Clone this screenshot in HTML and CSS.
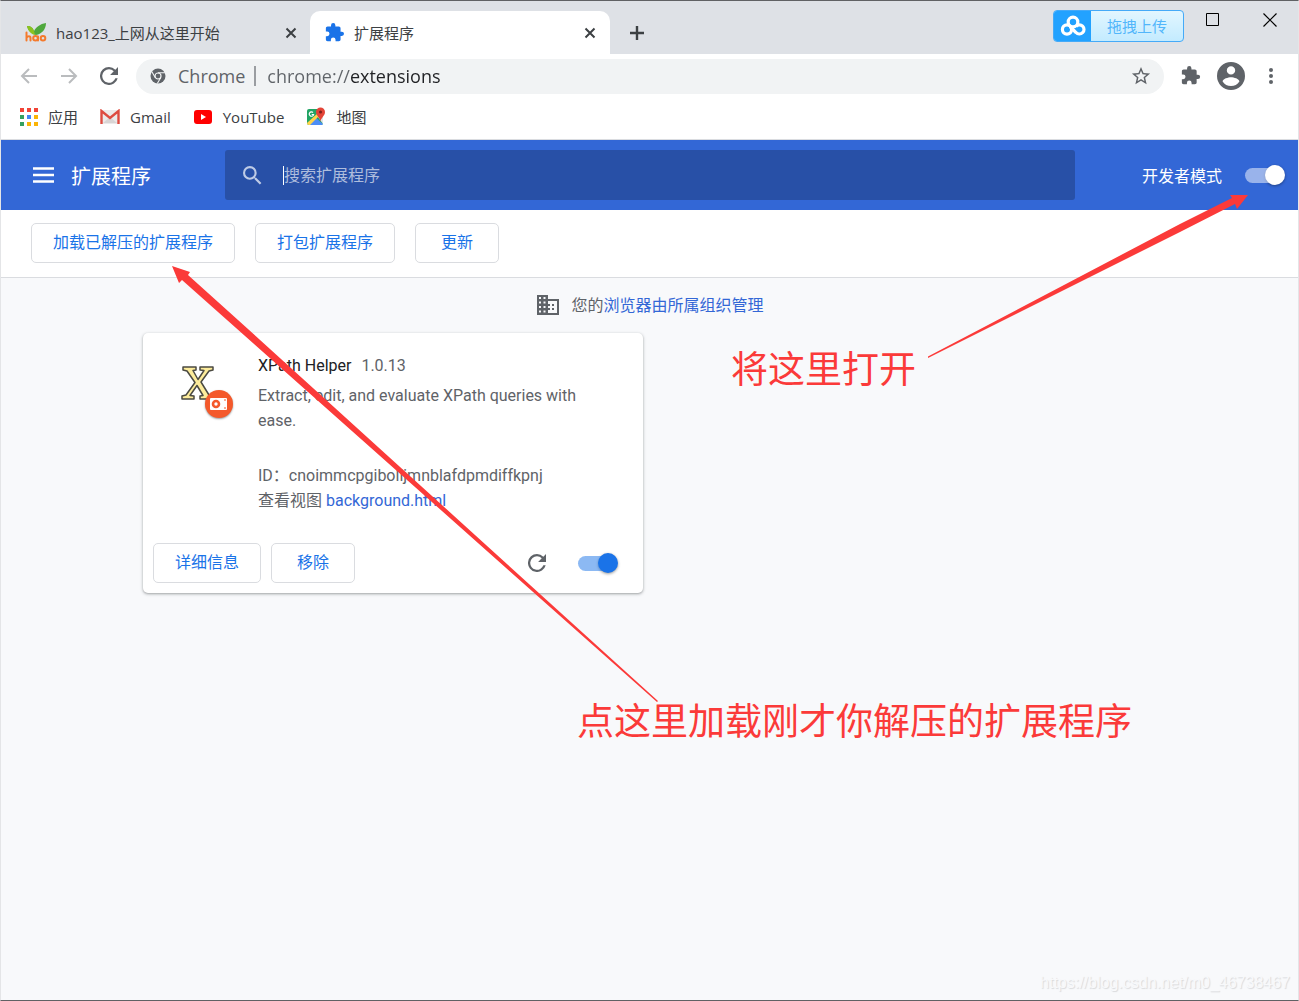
FILE: index.html
```html
<!DOCTYPE html>
<html lang="zh-CN">
<head>
<meta charset="utf-8">
<meta name="viewport" content="width=device-width, initial-scale=1">
<title>扩展程序</title>
<link rel="stylesheet" href="styles.css">
</head>
<body>
<div class="window">
  <header class="chrome">
    <div class="tabstrip">
      <div class="tab">
        <svg class="tab-icon" width="22" height="20" viewBox="0 0 22 20" aria-hidden="true">
          <path d="M2 3c4 0 6 2 7 5C11 4 15 1 21 0c0 6-4 11-10 12C7 11 3 8 2 3z" fill="#4fa83d"/>
          <path d="M2 3c4 0 6 2 7 5l1 4C6 11 3 8 2 3z" fill="#8cc220"/>
          <g fill="none" stroke="#f47a2c" stroke-width="2" stroke-linecap="round"><path d="M1.500 9.500v8M1.500 15c1-2.500 4-2.500 4 0v2.500M13 13.500v4"/><circle cx="10.500" cy="15.300" r="2.300"/><circle cx="18" cy="15.300" r="2.300"/></g>
        </svg>
        <span class="tab-title">hao123_上网从这里开始</span>
        <button class="icon-btn" aria-label="关闭标签页"><svg width="12" height="12" viewBox="0 0 12 12"><path d="M1.500 1.500l9 9M10.500 1.500l-9 9" stroke="#3c4043" stroke-width="2"/></svg></button>
      </div>
      <div class="tab tab-active">
        <svg class="tab-icon" width="19" height="19" viewBox="1 1 22 22" aria-hidden="true"><path fill="#1a73e8" d="M20.500 11H19V7c0-1.100-.9-2-2-2h-4V3.500a2.500 2.500 0 0 0-5 0V5H4c-1.100 0-2 .9-2 2v3.800h1.500a2.700 2.700 0 0 1 0 5.400H2V20c0 1.100.9 2 2 2h3.800v-1.500a2.700 2.700 0 0 1 5.400 0V22H17c1.100 0 2-.9 2-2v-4h1.500a2.500 2.500 0 0 0 0-5z"/></svg>
        <span class="tab-title">扩展程序</span>
        <button class="icon-btn" aria-label="关闭标签页"><svg width="12" height="12" viewBox="0 0 12 12"><path d="M1.500 1.500l9 9M10.500 1.500l-9 9" stroke="#3c4043" stroke-width="2"/></svg></button>
      </div>
      <button class="icon-btn new-tab" aria-label="新标签页"><svg width="16" height="16" viewBox="0 0 16 16"><path d="M8 1v14M1 8h14" stroke="#3c4043" stroke-width="2.400"/></svg></button>
      <div class="window-controls">
        <button class="upload">
          <span class="upload-logo"><svg width="26" height="22" viewBox="0 0 26 22" aria-hidden="true"><g fill="none" stroke="#fff" stroke-width="3.200"><circle cx="13" cy="7" r="4.800"/><circle cx="7" cy="14.500" r="4.600"/><path d="M10 11.500l6 6a4.600 4.600 0 1 0 0-6.200"/></g></svg></span>
          <span class="upload-text">拖拽上传</span>
        </button>
        <button class="icon-btn" aria-label="最大化"><svg width="14" height="14" viewBox="0 0 14 14"><path d="M.5.5h12v12H.5z" fill="none" stroke="#000"/></svg></button>
        <button class="icon-btn" aria-label="关闭"><svg width="14" height="14" viewBox="0 0 14 14"><path d="M.5.5l13 13M13.500.5l-13 13" stroke="#000" stroke-width="1.200"/></svg></button>
      </div>
    </div>

    <div class="navbar">
      <button class="icon-btn" aria-label="后退"><svg width="18" height="16" viewBox="0 0 18 16"><path d="M17 8H2M9 1L2 8l7 7" fill="none" stroke="#babcbe" stroke-width="2"/></svg></button>
      <button class="icon-btn" aria-label="前进"><svg width="18" height="16" viewBox="0 0 18 16"><path d="M1 8h15M9 1l7 7-7 7" fill="none" stroke="#babcbe" stroke-width="2"/></svg></button>
      <button class="icon-btn" aria-label="重新加载"><svg width="18" height="18" viewBox="4 4 16 16"><path fill="#5f6368" d="M17.650 6.350A7.960 7.960 0 0 0 12 4a8 8 0 1 0 7.730 10h-2.080A6 6 0 1 1 12 6c1.660 0 3.140.69 4.220 1.780L13 11h7V4z"/></svg></button>
      <div class="omnibox">
        <svg width="16" height="16" viewBox="0 0 16 16" aria-hidden="true"><circle cx="8" cy="8" r="7.500" fill="#5f6368"/><circle cx="8" cy="8" r="3" fill="none" stroke="#f1f3f4" stroke-width="1.200"/><path d="M8 4.800h7M5.200 9.500L1.900 3.700M10.700 9.700L7.300 15.500" stroke="#f1f3f4" stroke-width="1.100"/></svg>
        <span class="omnibox-chip">Chrome</span>
        <input class="omnibox-input" type="text" aria-label="地址栏" value="chrome://extensions">
        <button class="icon-btn" aria-label="添加书签"><svg width="20" height="20" viewBox="1 1 22 22"><path fill="#5f6368" d="M22 9.240l-7.190-.62L12 2 9.190 8.630 2 9.240l5.460 4.730L5.820 21 12 17.270 18.180 21l-1.630-7.030zM12 15.400l-3.760 2.270 1-4.280-3.320-2.880 4.380-.38L12 6.100l1.710 4.040 4.380.38-3.320 2.880 1 4.280z"/></svg></button>
      </div>
      <button class="icon-btn" aria-label="扩展程序"><svg width="20" height="20" viewBox="1 1 23 23"><path fill="#5f6368" d="M20.500 11H19V7c0-1.100-.9-2-2-2h-4V3.500a2.500 2.500 0 0 0-5 0V5H4c-1.100 0-2 .9-2 2v3.800h1.500a2.700 2.700 0 0 1 0 5.400H2V20c0 1.100.9 2 2 2h3.800v-1.500a2.700 2.700 0 0 1 5.400 0V22H17c1.100 0 2-.9 2-2v-4h1.500a2.500 2.500 0 0 0 0-5z"/></svg></button>
      <button class="icon-btn avatar" aria-label="个人资料"><svg width="28" height="28" viewBox="2 2 20 20"><path fill="#5f6368" d="M12 2a10 10 0 1 0 0 20 10 10 0 0 0 0-20zm0 3a3 3 0 1 1 0 6 3 3 0 0 1 0-6zm0 14.200a7.200 7.200 0 0 1-6-3.220c.03-1.990 4-3.080 6-3.080s5.970 1.090 6 3.080a7.200 7.200 0 0 1-6 3.220z"/></svg></button>
      <button class="icon-btn" aria-label="菜单"><svg width="6" height="18" viewBox="0 0 6 18"><g fill="#5f6368"><circle cx="3" cy="3" r="2"/><circle cx="3" cy="9" r="2"/><circle cx="3" cy="15" r="2"/></g></svg></button>
    </div>

    <nav class="bookmarks" aria-label="书签栏">
      <a href="#apps"><svg width="18" height="18" viewBox="0 0 18 18" aria-hidden="true"><path fill="#f14336" d="M0 0h4v4H0zM7 0h4v4H7zM14 0h4v4h-4z"/><path fill="#34a060" d="M0 7h4v4H0zM0 14h4v4H0z"/><path fill="#4285f4" d="M7 7h4v4H7z"/><path fill="#fbb405" d="M14 7h4v4h-4zM7 14h4v4H7zM14 14h4v4h-4z"/></svg>应用</a>
      <a href="#gmail"><svg width="20" height="16" viewBox="0 0 20 16" aria-hidden="true"><path fill="#eceaea" d="M2 1h16v14H2z"/><path fill="#d9d5d5" d="M3 14l7-6 7 6z"/><path d="M1.500 15V2l8.500 7 8.500-7v13" fill="none" stroke="#dd4b40" stroke-width="2.400"/></svg>Gmail</a>
      <a href="#youtube"><svg width="20" height="14" viewBox="0 0 20 14" aria-hidden="true"><rect x="1" width="18" height="14" rx="3" fill="#f00"/><path d="M8 4l5 3-5 3z" fill="#fff"/></svg>YouTube</a>
      <a href="#maps"><svg width="20" height="20" viewBox="0 0 20 20" aria-hidden="true"><rect x="1" y="2" width="16" height="16" rx="2" fill="#21a464"/><path d="M9 10l8 7-1 1H3z" fill="#4c8df6"/><path d="M1 16L13 5l2 2L4 18H3c-1 0-2-1-2-2z" fill="#ffd54a"/><path d="M12 10l5-3v10z" fill="#e3e5e6"/><path d="M7 5.500a2.200 2.200 0 1 0 .6 2H5.700" stroke="#fff" stroke-width="1.200" fill="none"/><path d="M14.500 15c0-4-4.500-6-4.500-10a4.500 4.500 0 0 1 9 0c0 4-4.500 6-4.500 10z" fill="#e34437"/><circle cx="14.500" cy="5" r="1.600" fill="#7c221b"/></svg>地图</a>
    </nav>
  </header>

  <div class="appbar">
    <button class="icon-btn" aria-label="主菜单"><svg width="21" height="16" viewBox="0 0 21 16"><path d="M0 1.500h21M0 8h21M0 14.500h21" stroke="#fff" stroke-width="2.400"/></svg></button>
    <h1 class="appbar-title">扩展程序</h1>
    <label class="search">
      <svg width="20" height="20" viewBox="3 2 19 19" aria-hidden="true"><path fill="#becbe6" d="M15.500 14h-.79l-.28-.27A6.470 6.470 0 0 0 16 9.500 6.500 6.500 0 1 0 9.500 16c1.610 0 3.090-.59 4.230-1.570l.27.28v.79l5 4.990L20.490 19zm-6 0a4.500 4.500 0 1 1 0-9 4.500 4.500 0 0 1 0 9z"/></svg>
      <input type="search" placeholder="搜索扩展程序" aria-label="搜索扩展程序">
    </label>
    <label class="dev-mode">开发者模式<input class="toggle toggle-light" type="checkbox" checked></label>
  </div>

  <div class="dev-tools">
    <button class="btn">加载已解压的扩展程序</button>
    <button class="btn">打包扩展程序</button>
    <button class="btn">更新</button>
  </div>

  <main class="content">
    <p class="managed">
      <svg width="22" height="20" viewBox="0 0 22 20" aria-hidden="true"><path fill="#5f6368" fill-rule="evenodd" d="M0 0h11v4h11v16H0zM2 2v2h2V2zM6.500 2v2h2V2zM2 6.500v2h2v-2zM6.500 6.500v2h2v-2zM2 11v2h2v-2zM6.500 11v2h2v-2zM2 15.500v2h2v-2zM6.500 15.500v2h2v-2zM11 6v3h2v2h-2v2h2v2h-2v3h9V6zM15 9h2v2h-2zM15 13h2v2h-2z"/></svg>
      <span>您的<a href="#managed">浏览器由所属组织管理</a></span>
    </p>
    <div class="cards">
      <article class="card">
        <div class="card-main">
          <div class="card-icon">
            <svg width="36" height="36" viewBox="0 0 36 36" aria-hidden="true"><path d="M2 2h13v3l-3 .5 5 9 6-9-4-.5V2h13v3l-4 1-8 11 8 13 4 1v3H19v-3l3-.5-6-10-7 10 4 .5v3H1v-3l4-1 9-12.500L6 6 2 5z" fill="#fdec9b" stroke="#4b4a42" stroke-width="1.500" stroke-linejoin="round"/></svg>
            <span class="badge"><svg width="18" height="12" viewBox="0 0 18 12" aria-hidden="true"><rect width="17" height="12" rx="1" fill="#fff"/><circle cx="6" cy="6" r="3" fill="none" stroke="#f4592b" stroke-width="2.600"/><path d="M15 1v2M15 9v2" stroke="#f4592b"/></svg></span>
          </div>
          <div class="card-text">
            <h2 class="card-title">XPath Helper <span class="version">1.0.13</span></h2>
            <p class="description">Extract, edit, and evaluate XPath queries with ease.</p>
            <p>ID：cnoimmcpgibolljmnblafdpmdiffkpnj</p>
            <p>查看视图 <a href="#background">background.html</a></p>
          </div>
        </div>
        <div class="card-actions">
          <button class="btn">详细信息</button>
          <button class="btn">移除</button>
          <button class="icon-btn reload" aria-label="重新加载"><svg width="18" height="18" viewBox="4 4 16 16"><path fill="#5f6368" d="M17.650 6.350A7.960 7.960 0 0 0 12 4a8 8 0 1 0 7.730 10h-2.080A6 6 0 1 1 12 6c1.660 0 3.140.69 4.220 1.780L13 11h7V4z"/></svg></button>
          <input class="toggle" type="checkbox" aria-label="启用 XPath Helper" checked>
        </div>
      </article>
    </div>
  </main>

  <svg class="arrows" width="1299" height="760" viewBox="0 0 1299 760" aria-hidden="true">
    <path fill="#fb3a39" d="M1248 195l-11 14-2-5-55 28-252 126v-1.500l252-132.500 52-26-2-3zM172 266l7 17 3-3 45 40 430 382 1-1-420-381-50-45 2-3z"/>
  </svg>
  <p class="note note-toggle">将这里打开</p>
  <p class="note note-load">点这里加载刚才你解压的扩展程序</p>
  <p class="watermark">https://blog.csdn.net/m0_46738467</p>
</div>
</body>
</html>
```
FILE: styles.css
```css
* {
  box-sizing: border-box;
}

body {
  margin: 0;
  font-family: "Open Sans", "Noto Sans CJK SC", sans-serif;
  font-size: 16px;
  color: #3c4043;
}

h1, h2, p {
  margin: 0;
  font-weight: 400;
}

a {
  color: #3367d6;
  text-decoration: none;
}

button, input {
  margin: 0;
  padding: 0;
  border: 0;
  background: none;
  font: inherit;
  color: inherit;
}

input:focus {
  outline: none;
}

svg {
  display: block;
  flex: none;
}

.window {
  position: relative;
  display: flex;
  flex-direction: column;
  min-height: 100vh;
  border: 1px solid #e4e5e7;
  border-top-color: #606164;
  border-bottom-color: #606164;
  background: #f8f9fb;
}

.icon-btn {
  display: grid;
  place-items: center;
  flex: none;
}

/* Tab strip */
.chrome {
  background: #fff;
  border-bottom: 1px solid #dadce0;
}

.tabstrip {
  display: flex;
  align-items: flex-end;
  height: 53px;
  background: #dee1e6;
}

.tab {
  display: flex;
  align-items: center;
  gap: 10px;
  flex: 0 1 300px;
  height: 43px;
  padding: 0 14px 0 15px;
  font-size: 15px;
}

.tab:first-child {
  flex-basis: 309px;
  padding: 0 13px 0 24px;
  gap: 9px;
}

.tab-active {
  border-radius: 10px 10px 0 0;
  background: #fff;
}

.tab-title {
  flex: 1;
  white-space: nowrap;
}

.new-tab {
  width: 54px;
  height: 43px;
}

.window-controls {
  display: flex;
  gap: 22px;
  align-self: flex-start;
  margin-left: auto;
  padding: 9px 21px 0 0;
}

.window-controls .icon-btn {
  width: 14px;
  height: 20px;
}

.window-controls .icon-btn + .icon-btn {
  margin-left: 21px;
}

.upload {
  display: flex;
  width: 131px;
  height: 32px;
  overflow: hidden;
  border: 1px solid #45aaf8;
  border-radius: 4px;
  background: linear-gradient(#e2f6ff, #c3ebff);
  color: #52b6fb;
  font-size: 15px;
}

.upload-logo {
  display: grid;
  place-items: center;
  width: 37px;
  height: 30px;
  background: #22a2ff;
}

.upload-text {
  flex: 1;
  line-height: 30px;
}

/* Navigation bar */
.navbar {
  display: flex;
  align-items: center;
  height: 44px;
  padding: 0 24px 0 19px;
  gap: 22px;
}

.navbar > .omnibox {
  margin-left: -4px;
  margin-right: -5px;
}

.navbar .avatar {
  margin: 0 1px 0 -6px;
}

.omnibox {
  display: flex;
  align-items: center;
  flex: 1;
  height: 35px;
  padding: 0 13px 0 14px;
  border-radius: 18px;
  background: #f1f3f4;
  font-size: 18px;
}

.omnibox-chip {
  margin-left: 12px;
  padding-right: 9px;
  border-right: 2px solid #9a9da1;
  color: #5f6368;
  line-height: 20px;
}

.omnibox-input {
  flex: 1;
  min-width: 0;
  margin-left: 11px;
  background: linear-gradient(90deg, #5f6368 83px, #202124 83px);
  background-clip: text;
  -webkit-background-clip: text;
  -webkit-text-fill-color: transparent;
}

.bookmarks {
  display: flex;
  align-items: center;
  gap: 22px;
  height: 41px;
  padding: 0 19px 4px;
  font-size: 15px;
}

.bookmarks a {
  display: flex;
  align-items: center;
  gap: 10px;
  color: #3c4043;
}

/* Page header */
.appbar {
  display: flex;
  align-items: center;
  height: 70px;
  padding: 0 13px 0 32px;
  background: #3367d6;
  color: #fff;
}

.appbar-title {
  width: 154px;
  margin-left: 17px;
  font-size: 20px;
}

.search {
  display: flex;
  align-items: center;
  gap: 20px;
  flex: 0 1 850px;
  height: 50px;
  padding: 0 18px;
  border-radius: 3px;
  background: #2850a7;
}

.search input {
  flex: 1;
  min-width: 0;
  height: 19px;
  border-left: 1px solid #fff;
}

.search input::placeholder {
  color: #aebddd;
}

.dev-mode {
  display: flex;
  align-items: center;
  gap: 23px;
  margin-left: auto;
}

.toggle {
  display: grid;
  align-items: center;
  width: 40px;
  height: 20px;
  appearance: none;
  color: #1a73e8;
}

.toggle::before,
.toggle::after {
  grid-area: 1 / 1;
  content: "";
  background: currentColor;
}

.toggle::before {
  width: 35px;
  height: 15px;
  border-radius: 8px;
  opacity: 0.5;
}

.toggle::after {
  justify-self: end;
  width: 20px;
  height: 20px;
  border-radius: 50%;
  box-shadow: 0 1px 3px rgba(0, 0, 0, 0.4);
}

.toggle-light {
  color: #fff;
}

.dev-tools {
  display: flex;
  gap: 20px;
  padding: 13px 30px 14px;
  border-bottom: 1px solid #dadce0;
  background: #fff;
}

.btn {
  height: 40px;
  min-width: 84px;
  padding: 0 21px 4px;
  border: 1px solid #dadce0;
  border-radius: 5px;
  background: #fff;
  color: #1a73e8;
}

/* Extension list */
.content {
  flex: 1;
  padding: 15px 19px 15px 21px;
  color: #5f6368;
}

.managed {
  display: flex;
  align-items: center;
  justify-content: center;
  gap: 12px;
  line-height: 24px;
}

.cards {
  display: grid;
  grid-template-columns: repeat(2, minmax(0, 1fr));
  gap: 15px;
  max-width: 1015px;
  margin: 16px auto 0;
}

.card {
  border-radius: 5px;
  background: #fff;
  box-shadow: 0 1px 3px 1px rgba(60, 64, 67, 0.15), 0 1px 2px rgba(60, 64, 67, 0.3);
  font-family: Roboto, "Noto Sans CJK SC", sans-serif;
}

.card-main {
  display: flex;
  gap: 24px;
  padding: 20px 25px 0 38px;
  line-height: 25px;
}

.card-icon {
  position: relative;
  width: 53px;
  height: 53px;
  padding-top: 12px;
}

.badge {
  position: absolute;
  right: 1px;
  bottom: -12px;
  display: grid;
  place-items: center;
  width: 28px;
  height: 28px;
  border-radius: 50%;
  background: #f4592b;
  box-shadow: 0 1px 2px rgba(0, 0, 0, 0.4);
}

.card-text {
  flex: 1;
}

.card-title {
  margin-bottom: 5px;
  color: #202124;
  font-size: 16px;
}

.version {
  margin-left: 6px;
  color: #5f6368;
}

.description {
  margin-bottom: 30px;
}

.card-actions {
  display: flex;
  align-items: center;
  gap: 10px;
  padding: 30px 25px 10px 10px;
}

.reload {
  margin-left: auto;
  margin-right: 22px;
}

/* Annotations drawn over the page */
.arrows,
.note,
.watermark {
  position: absolute;
  pointer-events: none;
}

.arrows {
  top: -1px;
  left: -1px;
}

.note {
  color: #fb3a39;
  font-size: 37px;
  line-height: 48px;
  white-space: nowrap;
}

.note-toggle {
  top: 344px;
  left: 730px;
}

.note-load {
  top: 696px;
  left: 576px;
}

.watermark {
  right: 8px;
  bottom: 7px;
  color: #f8f9fb;
  font-family: "Liberation Sans", sans-serif;
  font-size: 16px;
  line-height: 20px;
  text-shadow: 1px 1px 1px #d8d9db;
}
```
